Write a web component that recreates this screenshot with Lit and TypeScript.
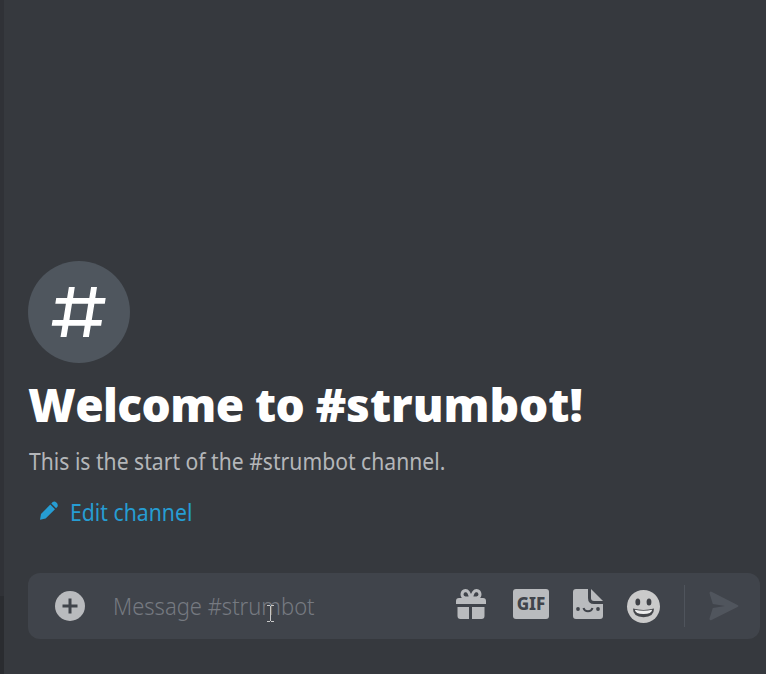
import { LitElement, html, css, svg } from "lit";
import { customElement } from "lit/decorators.js";

const hash = svg`<path d="M68.9 287h5.9l-1.7 11h16.2l1.8-11H97l-1.7 11h10.4l-.9 5.7H94.4L91.8 320H102l-.9 5.7H90.8L88.9 337h-6l1.8-11.3H68.4L66.5 337h-6l1.900-11.300H51.700l.9-5.700h10.700l2.600-16.300H55.300l.9-5.700h10.900zM72 303.700 69.400 320h16.200l2.600-16.300z"/>`;

@customElement("app-root")
export class AppRoot extends LitElement {
  static styles = css`
    :host { display: block; }
    * { box-sizing: border-box; }
    svg { display: block; flex: none; }
    .page { position: relative; display: flex; height: 674px; background: #36393e; overflow: hidden;
      font-family: "Noto Sans", "Open Sans", sans-serif; }
    .rail { width: 4px; background: linear-gradient(#303237 0 596px, #2a2c30 596px); }
    .channel { flex: 1; display: flex; flex-direction: column; justify-content: flex-end; padding: 0 6px 35px 24px; }
    .badge { width: 102px; height: 102px; border-radius: 50%; background: #4f565e; fill: #fff; }
    h1, p { margin: 0; white-space: nowrap; }
    h1 { height: 64px; margin-top: 9px; color: #fff; font: 800 46px/64px "Open Sans", sans-serif; white-space: pre; }
    .lead { letter-spacing: -0.58px; }
    p span, .edit span, .placeholder span { display: inline-block; transform-origin: 0 50%; }
    .intro { height: 32px; margin-top: 9px; color: #b4b6b9; font-size: 23px; line-height: 32px; }
    .intro span { transform: translateX(1px) scaleX(.919); }
    .edit { display: flex; align-items: center; height: 32px; margin-top: 19px; padding-left: 11px; color: #269dd3; font-size: 23px; line-height: 32px; }
    .edit svg { margin: -3px 11px 0 0; fill: currentColor; }
    .edit span { transform: scaleX(.923); }
    .composer { position: relative; display: flex; align-items: center; height: 66px; margin-top: 45px; padding-left: 27px;
      border-radius: 12px; background: #40444b; fill: #b9bbbe; }
    .placeholder { width: 371px; padding-left: 28px; color: #767a81; font-size: 23px; font-weight: 300; line-height: 32px; white-space: nowrap; }
    .placeholder span { transform: scaleX(.955); }
    .gif { display: grid; place-items: center; width: 36px; height: 30px; margin: -4px 24px 0 27px; border-radius: 3px;
      background: #b9bbbe; color: #40444b; font: 800 17px/30px "Noto Sans", sans-serif; }
    .raised { margin-top: -4px; }
    .smile { margin-left: 23px; }
    .divider { width: 1px; height: 42px; margin: 0 24px; background: #4f545c; }
    .cursor { position: absolute; left: 239px; top: 32px; }
  `;
  render() {
    return html`<div class="page">
      <div class="rail"></div>
      <main class="channel">
        <svg class="badge" viewBox="28 261 102 102">${hash}</svg>
        <h1><span class="lead">Welcome to </span><span>#strumbot!</span></h1>
        <p class="intro"><span>This is the start of the #strumbot channel.</span></p>
        <div class="edit">
          <svg width="20" height="19" viewBox="0 0 20 19"><path d="M12.300 2.500 13.700 1.100Q15.500-.2 17.400 1.600T18.600 5.500L17.100 7.200zM11.300 3.600 16 8.300 6.600 17.500 1 18.800 2 13z"/></svg>
          <span>Edit channel</span>
        </div>
        <div class="composer">
          <svg width="30" height="30" viewBox="0 0 30 30"><circle cx="15" cy="15" r="15"/><path d="M15 7.500v15M7.500 15h15" stroke="#40444b" stroke-width="3"/></svg>
          <div class="placeholder"><span>Message #strumbot</span></div>
          <svg class="raised" width="30" height="30" viewBox="0 0 30 30"><path d="M0 15v-3q0-3 3-3h24q3 0 3 3v3zM1.500 18H13v12H4.500q-3 0-3-3zM16 18h12.500v9q0 3-3 3H16z"/><path d="M14.500 9H9.200Q6 8.500 6 5.200 6.300 2 9.500 1.600 13 1.500 14.500 9ZM15.500 9h5.300Q24 8.500 24 5.200 23.700 2 20.500 1.600 17 1.500 15.500 9Z" fill="none" stroke="#b9bbbe" stroke-width="3"/></svg>
          <div class="gif"><span>GIF</span></div>
          <svg class="raised" width="30" height="30" viewBox="0 0 30 30"><path d="M3 0h12v9q0 6 6 6h9v12q0 3-3 3H3q-3 0-3-3V3q0-3 3-3Z"/><path d="M18 0v9q0 3 3 3h9z"/><circle cx="5" cy="20" r="1.900" fill="#40444b"/><circle cx="25" cy="20" r="1.900" fill="#40444b"/><path d="M10.500 19q1 3.300 4.500 3.300t4.500-3.300" fill="none" stroke="#40444b" stroke-width="2"/></svg>
          <svg class="smile" width="34" height="34" viewBox="0 0 34 34"><circle cx="17.500" cy="17.500" r="16.500" fill="#cacaca"/><ellipse cx="11.800" cy="13" rx="2.400" ry="3.600" fill="#3f4146"/><ellipse cx="23" cy="13" rx="2.400" ry="3.600" fill="#3f4146"/><path d="M7 19.500q10.500 2.800 21 0 .2 8.500-10.500 8.700Q6.800 28 7 19.500Z" fill="#45474b"/><path d="M8.800 20.800q8.700 2 17.400 0-.5 4.200-8.700 4.200T8.800 20.800Z" fill="#eee"/></svg>
          <div class="divider"></div>
          <svg width="31" height="30" viewBox="0 0 31 30"><path d="M2.500.7 28.500 14Q30.500 15 28.500 16L2.500 29Q.3 29.800.5 27.500L3.800 17 16 15 3.800 13 .5 2.200Q.4.100 2.500.7Z" fill="#50555d"/></svg>
          <svg class="cursor" width="8" height="17" viewBox="0 0 8 17"><path d="M0 .5h3m1 0h3M3.500 1v15M0 16.500h3m1 0h3" fill="none" stroke="#c8c8c8"/></svg>
        </div>
      </main>
    </div>`;
  }
}
